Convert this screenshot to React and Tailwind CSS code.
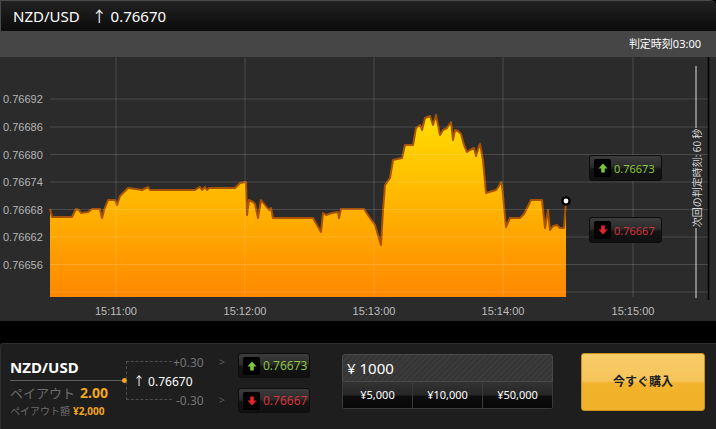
import React from 'react';

const line = [
  [50, 209], [52, 217], [72, 217], [76, 209], [79, 210], [81, 213], [88, 212], [92, 209], [100, 209], [102, 218],
  [104, 210], [108, 200], [115, 200], [117, 205], [120, 196], [124, 192], [128, 188], [136, 189], [142, 190], [148, 187],
  [150, 190], [195, 190], [198, 188], [200, 187], [202, 190], [203, 189], [205, 187], [207, 190], [209, 188], [235, 188],
  [240, 183], [246, 182], [247, 215], [249, 200], [253, 202], [255, 204], [258, 218], [261, 200], [265, 205], [269, 210],
  [271, 208], [273, 218], [313, 218], [317, 225], [321, 232], [323, 213], [326, 215], [332, 213], [338, 212], [339, 218],
  [341, 209], [364, 209], [370, 218], [375, 225], [378, 235], [381, 245], [383, 210], [385, 185], [390, 178], [393, 160],
  [402, 158], [405, 145], [413, 145], [416, 128], [420, 125], [422, 130], [425, 118], [430, 116], [433, 125], [436, 115],
  [438, 125], [440, 135], [443, 130], [447, 128], [451, 122], [453, 140], [455, 130], [458, 131], [461, 134], [464, 145],
  [467, 152], [470, 150], [474, 148], [476, 156], [479, 146], [480, 144], [483, 160], [486, 193], [496, 190], [499, 186],
  [501, 182], [502, 185], [506, 227], [510, 218], [520, 218], [524, 214], [531, 200], [542, 200], [545, 228], [548, 210],
  [550, 230], [553, 226], [557, 225], [560, 228], [564, 228], [566, 201],
];

const topLine = line.map(p => p.join(',')).join(' ');
const area = topLine + ' 566,297 50,297';

const yLabels = [
  ['0.76692', 99], ['0.76686', 127], ['0.76680', 154.5], ['0.76674', 182],
  ['0.76668', 209.5], ['0.76662', 237], ['0.76656', 264.5],
];
const hLines = [99, 127, 154.5, 182, 209.5, 237, 264.5, 292];
const xLabels = [['15:11:00', 116], ['15:12:00', 245], ['15:13:00', 374], ['15:14:00', 503], ['15:15:00', 633]];

function Arrow({ up }) {
  return (
    <svg width="10" height="10" viewBox="0 0 10 10">
      {up ? (
        <path d="M5 0.5 L9.5 5.5 L6.8 5.5 L6.8 9.5 L3.2 9.5 L3.2 5.5 L0.5 5.5 Z" fill="#7cc63a" />
      ) : (
        <path d="M5 9.5 L9.5 4.5 L6.8 4.5 L6.8 0.5 L3.2 0.5 L3.2 4.5 L0.5 4.5 Z" fill="#e3222c" />
      )}
    </svg>
  );
}

function PriceTag({ up, value, className }) {
  return (
    <div className={`flex items-center gap-[3px] pl-[4px] rounded-[3px] border border-[#0d0d0d] bg-[linear-gradient(#3c3c3c_0%,#2c2c2c_45%,#141414_55%,#101010_100%)] ${className}`}>
      <div className="w-[17px] h-[18px] bg-black rounded-[2px] flex items-center justify-center">
        <Arrow up={up} />
      </div>
      <span className={`text-[11px] leading-none ${up ? 'text-[#8dc63f]' : 'text-[#d6343c]'}`}>{value}</span>
    </div>
  );
}

export default function App() {
  return (
    <div className="w-[716px] h-[429px] bg-black flex flex-col overflow-hidden font-['Noto_Sans','Noto_Sans_CJK_JP',sans-serif]">
      {/* header */}
      <div className="h-[31px] shrink-0 flex items-center pl-[12px] gap-[12px] text-white text-[15px] rounded-tr-[6px] border-t border-l border-[#4a4a4a] bg-[linear-gradient(#222_0%,#141414_60%,#0c0c0c_100%)]">
        <span>NZD/USD</span>
        <span>↑ 0.76670</span>
      </div>

      {/* sub bar */}
      <div className="h-[26px] shrink-0 flex items-center justify-end pr-[15px] bg-[#464646] text-white text-[11px]">
        判定時刻03:00
      </div>

      {/* chart */}
      <div className="relative h-[264px] shrink-0 bg-[#2b2b2b]">
        <svg width="716" height="264" viewBox="0 57 716 264" className="block">
          <defs>
            <linearGradient id="fillGrad" x1="0" y1="112" x2="0" y2="297" gradientUnits="userSpaceOnUse">
              <stop offset="0" stopColor="#ffde00" />
              <stop offset="0.55" stopColor="#ffb000" />
              <stop offset="1" stopColor="#ff8700" />
            </linearGradient>
          </defs>
          <polygon points={area} fill="url(#fillGrad)" />
          <polyline points={topLine} fill="none" stroke="#a95200" strokeWidth="2" strokeLinejoin="round" />
          {hLines.map(y => (
            <line key={y} x1="50" x2="708" y1={y} y2={y} stroke="#ffffff" strokeOpacity="0.15" strokeWidth="1" />
          ))}
          {xLabels.map(([, x]) => (
            <line key={x} x1={x} x2={x} y1="57" y2="297" stroke="#ffffff" strokeOpacity="0.15" strokeWidth="1" />
          ))}
          {yLabels.map(([t, y]) => (
            <text key={t} x="3" y={y + 4} fill="#b5b5b5" fontSize="11" fontFamily="Liberation Sans, Arial, sans-serif">{t}</text>
          ))}
          {xLabels.map(([t, x]) => (
            <text key={t} x={x} y="315" textAnchor="middle" fill="#bdbdbd" fontSize="11" fontFamily="Liberation Sans, Arial, sans-serif">{t}</text>
          ))}
          <circle cx="566" cy="201" r="3.6" fill="#ffffff" stroke="#000000" strokeWidth="2.4" />
          <line x1="696" x2="696" y1="66" y2="128" stroke="#dddddd" strokeWidth="1" />
          <line x1="696" x2="696" y1="228" y2="298" stroke="#dddddd" strokeWidth="1" />
          <line x1="708.5" x2="708.5" y1="57" y2="300" stroke="#000000" strokeWidth="1.5" />
          <text x="696" y="178" transform="rotate(-90 696 178)" textAnchor="middle" dominantBaseline="central" fill="#dcdcdc" fontSize="10" fontFamily="Noto Sans CJK JP, sans-serif">次回の判定時刻: 60 秒</text>
        </svg>
        <PriceTag up value="0.76673" className="absolute left-[589px] top-[98px] w-[73px] h-[26px]" />
        <PriceTag value="0.76667" className="absolute left-[589px] top-[160px] w-[73px] h-[26px]" />
      </div>

      {/* gap */}
      <div className="h-[22px] shrink-0 bg-black" />

      {/* bottom panel */}
      <div className="flex-1 flex bg-[#1e1e1e] border-l border-t border-[#2e2e2e] rounded-tl-[3px]">
        {/* pair info */}
        <div className="w-[123px] pl-[9px] flex flex-col">
          <div className="pt-[15px] text-white text-[15px] font-bold leading-[16px]">NZD/USD</div>
          <div className="mt-[5px] h-px bg-[#5e5e5e]" />
          <div className="mt-[3px] flex items-center leading-[18px]">
            <span className="text-[#6c6c6c] text-[13px]">ペイアウト</span>
            <span className="ml-[5px] text-[#f2a51f] text-[14px] font-bold">2.00</span>
          </div>
          <div className="mt-[2px] flex items-center leading-[14px] text-[10px]">
            <span className="text-[#6c6c6c]">ペイアウト額</span>
            <span className="ml-[3px] text-[#f2a51f] font-bold">¥2,000</span>
          </div>
        </div>

        {/* spread bracket */}
        <div className="relative w-[114px] flex flex-col pt-[9px] text-[12px]">
          <div className="absolute left-[-2px] top-[34px] w-[5px] h-[5px] rounded-full bg-[#f2a51f]" />
          <div className="absolute left-[2px] top-[17px] w-[46px] h-[39px] border-l border-t border-b border-dashed border-[#4d4d4d]" />
          <div className="h-[19px] flex items-center pl-[49px] text-[#747474]">
            <span>+0.30</span>
            <span className="ml-[15px] text-[#5a5a5a] text-[11px]">&gt;</span>
          </div>
          <div className="h-[19px] flex items-center pl-[9px] text-white">
            <span>↑ 0.76670</span>
          </div>
          <div className="h-[19px] flex items-center pl-[52px] text-[#747474]">
            <span>-0.30</span>
            <span className="ml-[15px] text-[#5a5a5a] text-[11px]">&gt;</span>
          </div>
        </div>

        {/* buy buttons */}
        <div className="w-[72px] flex flex-col pt-[9px] gap-[10px]">
          <PriceTag up value="0.76673" className="w-[72px] h-[25px] [&>span]:text-[12px]" />
          <PriceTag value="0.76667" className="w-[72px] h-[25px] [&>span]:text-[12px]" />
        </div>

        {/* amount */}
        <div className="ml-[32px] w-[211px] flex flex-col pt-[10px]">
          <div className="h-[28px] flex items-center pl-[4px] text-white text-[15px] rounded-t-[3px] border border-[#4a4a4a] bg-[repeating-linear-gradient(135deg,#3b3b3b_0px,#3b3b3b_2px,#353535_2px,#353535_4px)]">
            ¥ 1000
          </div>
          <div className="h-[27px] flex gap-[1px] bg-[#3a3a3a] rounded-b-[3px] border-x border-b border-[#3a3a3a]">
            {['¥5,000', '¥10,000', '¥50,000'].map(t => (
              <div key={t} className="flex-1 flex items-center justify-center text-white text-[11px] bg-[linear-gradient(#333_0%,#262626_50%,#0c0c0c_55%,#080808_100%)]">
                {t}
              </div>
            ))}
          </div>
        </div>

        {/* buy now */}
        <div className="ml-[28px] pt-[9px]">
          <div className="w-[124px] h-[58px] rounded-[3px] border border-[#c89020] flex items-center justify-center text-[#222] text-[12px] font-bold bg-[linear-gradient(#f8cc68_0%,#f6c55a_48%,#f2b42c_52%,#f1b128_100%)]">
            今すぐ購入
          </div>
        </div>
      </div>
    </div>
  );
}
